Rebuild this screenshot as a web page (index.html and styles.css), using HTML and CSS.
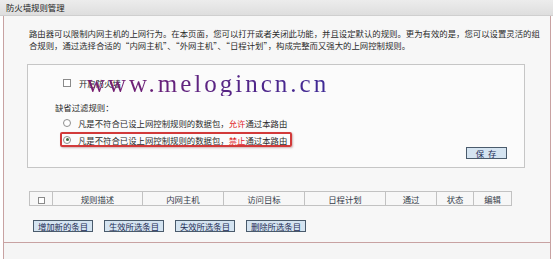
FILE: index.html
```html
<!DOCTYPE html>
<html lang="zh-CN">
<head>
<meta charset="utf-8">
<title>防火墙规则管理</title>
<link rel="stylesheet" href="styles.css">
</head>
<body>
<div class="title">防火墙规则管理</div>
<div class="panel">
  <p class="intro">路由器可以限制内网主机的上网行为。在本页面，您可以打开或者关闭此功能，并且设定默认的规则。更为有效的是，您可以设置灵活的组<br>合规则，通过选择合适的“内网主机”、“外网主机”、“日程计划”，构成完整而又强大的上网控制规则。</p>
  <div class="box">
    <div class="row check-row"><span class="checkbox"></span><span>开启防火墙</span></div>
    <div class="label">缺省过滤规则：</div>
    <div class="row radio-row"><span class="radio"></span><span>凡是不符合已设上网控制规则的数据包，<em class="red">允许</em>通过本路由</span></div>
    <div class="row radio-row marked"><span class="radio on"></span><span>凡是不符合已设上网控制规则的数据包，<em class="red">禁止</em>通过本路由</span></div>
    <div class="save-wrap"><button class="btn save">保 存</button></div>
  </div>
  <table class="rules">
    <colgroup>
      <col class="c-check"><col class="c-desc"><col class="c-mid"><col class="c-mid"><col class="c-mid"><col class="c-pass"><col class="c-state"><col class="c-edit">
    </colgroup>
    <tr>
      <th><span class="checkbox small"></span></th>
      <th>规则描述</th>
      <th>内网主机</th>
      <th>访问目标</th>
      <th>日程计划</th>
      <th>通过</th>
      <th>状态</th>
      <th>编辑</th>
    </tr>
  </table>
  <div class="actions">
    <button class="btn act">增加新的条目</button>
    <button class="btn act">生效所选条目</button>
    <button class="btn act">失效所选条目</button>
    <button class="btn act">删除所选条目</button>
  </div>
</div>
<div class="footer"></div>
<div class="watermark">www.melogincn.cn</div>
</body>
</html>
```
FILE: styles.css
```css
* { box-sizing: border-box; }
html, body { margin: 0; padding: 0; }
body {
  width: 553px;
  height: 259px;
  overflow: hidden;
  background: #ffffff;
  font-family: "Noto Sans CJK SC", sans-serif;
  font-size: 8.4px;
  color: #2b2b2b;
  position: relative;
}
.title {
  height: 16px;
  line-height: 15px;
  padding-left: 6px;
  background: linear-gradient(#ececec, #dedede);
  border-bottom: 1px solid #cfcfcf;
  color: #222;
}
.panel {
  margin: 0 2px 0 3px;
  border-left: 1px solid #c8a2a2;
  border-right: 1px solid #c8a2a2;
  border-bottom: 1px solid #c8a2a2;
  background: #f7f7f7;
  padding: 11px 0 10px 0;
}
.intro {
  margin: 0 0 0 25px;
  line-height: 12px;
  white-space: nowrap;
}
.box {
  margin: 13px 0 0 23px;
  width: 498px;
  border: 1px solid #c6c6c6;
  background: #fbfbfb;
  padding: 12px 0 8px 0;
}
.row {
  display: flex;
  align-items: center;
  height: 12px;
  line-height: 12px;
}
.check-row { margin-left: 35px; gap: 8px; }
.label { margin: 12px 0 0 27px; height: 12px; line-height: 12px; }
.radio-row { margin: 4px 0 0 35px; gap: 7px; }
.radio-row.marked {
  display: inline-flex;
  margin: 3px 0 0 32px;
  height: 15px;
  padding: 0 3px 0 1px;
  border: 2px solid #d23a3a;
  border-radius: 2px;
  box-shadow: 1px 1px 2px rgba(120, 40, 40, 0.35);
}
.checkbox {
  display: inline-block;
  width: 8px;
  height: 8px;
  border: 1px solid #8a8a8a;
  background: #fff;
}
.checkbox.small { width: 7px; height: 7px; vertical-align: middle; }
.radio {
  display: inline-flex;
  align-items: center;
  justify-content: center;
  width: 8px;
  height: 8px;
  border: 1px solid #8e8e8e;
  border-radius: 50%;
  background: #fff;
}
.radio.on::after {
  content: "";
  width: 3px;
  height: 3px;
  border-radius: 50%;
  background: #3f6a3f;
}
.red { font-style: normal; color: #e0201e; }
.save-wrap { display: flex; justify-content: flex-end; padding-right: 17px; }
.btn {
  font-family: "Noto Sans CJK SC", sans-serif;
  font-size: 8.4px;
  line-height: 10px;
  height: 12px;
  padding: 0;
  margin: 0;
  border: 1px solid #4a5b6c;
  background: #d5e4f1;
  color: #1e2d55;
  border-radius: 0;
}
.save { width: 41px; letter-spacing: 1px; }
.rules {
  margin: 23px 0 0 25px;
  width: 482px;
  table-layout: fixed;
  border-collapse: collapse;
}
.rules th {
  height: 14px;
  padding: 0;
  border: 1px solid #c2c2c2;
  font-weight: normal;
  color: #333a48;
  text-align: center;
  line-height: 12px;
}
.c-check { width: 23px; }
.c-desc { width: 90px; }
.c-mid { width: 81px; }
.c-pass { width: 51px; }
.c-state { width: 37px; }
.c-edit { width: 38px; }
.actions {
  display: flex;
  gap: 11px;
  margin: 14px 0 0 29px;
}
.act { width: 60px; }
.footer {
  margin: 0 2px 0 3px;
  height: 17px;
  border-left: 1px solid #c8a2a2;
  border-right: 1px solid #c8a2a2;
  border-bottom: 1px solid #c8a2a2;
  background: #f5f5f5;
}
.watermark {
  position: absolute;
  left: 87px;
  top: 71px;
  font-family: "Liberation Serif", serif;
  font-size: 25px;
  line-height: 25px;
  letter-spacing: 3px;
  white-space: nowrap;
  background: linear-gradient(90deg, #7a1e6e, #3e2a96);
  -webkit-background-clip: text;
  background-clip: text;
  color: transparent;
}
```
